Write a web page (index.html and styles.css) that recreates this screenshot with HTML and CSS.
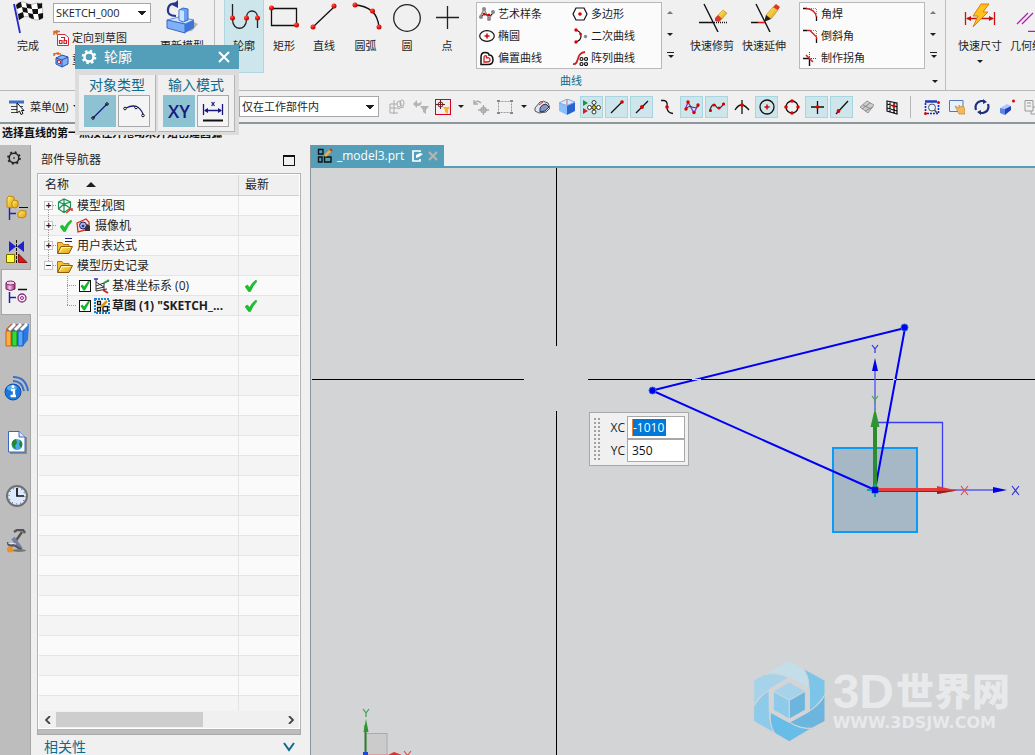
FILE: index.html
```html
<!DOCTYPE html>
<html lang="zh-CN">
<head>
<meta charset="utf-8">
<title>_model3.prt</title>
<link rel="stylesheet" href="styles.css">
</head>
<body>
<svg class="defs" aria-hidden="true">
  <defs>
    <radialGradient id="ball" cx=".35" cy=".3" r=".8"><stop offset="0" stop-color="#ff5a4a"/><stop offset=".5" stop-color="#e81408"/><stop offset="1" stop-color="#a80000"/></radialGradient>
    <linearGradient id="gold" x1="0" y1="0" x2="1" y2="1"><stop offset="0" stop-color="#fff27a"/><stop offset="1" stop-color="#e09a00"/></linearGradient>
    <linearGradient id="rose" x1="0" x2="1"><stop offset="0" stop-color="#b04890"/><stop offset=".4" stop-color="#f0c8e8"/><stop offset="1" stop-color="#902870"/></linearGradient>
    <symbol id="tick" viewBox="0 0 12 12"><path d="M0 6.500 2.500 5 4.500 7.500Q7 2.500 11 0L12 1.500Q8 5 5.500 11.500L3.500 11.500Z" fill="#16c52c" stroke="#0b9f20" stroke-width=".5"/></symbol>
    <symbol id="folder" viewBox="0 0 16 13"><path d="M.5 12V1.500H5L6.500 3.500H12V6" fill="#f7c030" stroke="#b07808"/><path d="M.5 12.500 4 5.500H15.500L12 12.500Z" fill="url(#gold)" stroke="#8a5a08"/><path d="M2.500 11 5 6.500H13" stroke="#fff6c0" fill="none"/></symbol>
  </defs>
</svg>

<header class="ribbon">
  <section class="group group-sketch">
    <button class="tool finish"><svg width="32" height="34" viewBox="0 0 32 34"><path d="M2 4 8 33" stroke="#2828c8" stroke-width="1.800"/><path d="M4 5Q9 0 14 3T25 3Q28 4 30 3L31 18Q25 22 19 18T7 20Z" fill="#fff" stroke="#888" stroke-width=".5"/><path d="M4 5Q7 2 9 2L10 7 5 9ZM14 3Q17 5 19 4L20 9 15 8ZM25 3Q28 4 30 3V8L26 9ZM10 7 15 8 16 13 11 12ZM20 9 26 9 26 14 21 14ZM6 14 11 12 12 17 7 20ZM16 13 21 14 22 19Q19 19 17 17ZM26 14 31 13V18L27 20Z" fill="#111"/></svg><span>完成</span></button>
    <div class="sketch-col">
      <select class="sketch-name" aria-label="草图名"><option>SKETCH_000</option></select>
      <button class="row-tool"><svg width="16" height="16" viewBox="0 0 16 16"><path d="M4.500 4.500H12L15.500 7.500V15.500H4.500Z" fill="#fff" stroke="#d03038"/><path d="M6.500 10.500H9V13.500H6.500ZM11 10.500H13.500V13.500H11ZM8 7.500H11.500V10" fill="none" stroke="#d02030" stroke-width="1.200"/><path d="M1 5V1.500H7M1 1 5 5M4 0V3" stroke="#d86a28" fill="none" stroke-width="1.500"/></svg><span>定向到草图</span></button>
      <button class="row-tool"><svg width="16" height="16" viewBox="0 0 16 16"><path d="M3 6 9 3 15 5V12L9 15 3 12Z" fill="#7fb0f4" stroke="#2450b8"/><path d="M3 6 9 8V15M9 8 15 5" stroke="#2450b8" fill="none"/><path d="M4.500 8 7.500 9V12L4.500 11Z" fill="#e8f2ff" stroke="#d02030"/><path d="M1 4Q1 1 6 1M1 1V4M4 2H8" stroke="#d86a28" fill="none" stroke-width="1.400"/></svg><span>重新附着</span></button>
    </div>
    <button class="tool update"><svg width="32" height="34" viewBox="0 0 32 34"><path d="M12 32 26 31 32 24 28 22Z" fill="#b5b5b5"/><path d="M1 20 13 17 28 20 19 24Z" fill="#cde4ff" stroke="#5f8ce0"/><path d="M1 20 19 24V33L1 28Z" fill="#7fb0f8" stroke="#3b68c8"/><path d="M19 24 28 20V28L19 33Z" fill="#3f74d8"/><path d="M13 10 17 8 22 9V20L17 22 13 20Z" fill="#6aa0f0" stroke="#3868cc"/><path d="M13.500 10 18 11V21.500L13.500 20Z" fill="#c8e2ff"/><path d="M10 16Q1 16 2 9 3 2 12 4" fill="none" stroke="#2a3590" stroke-width="2.200"/><path d="M12 0V8L6 5Z" fill="#2a3590"/></svg><span>更新模型</span></button>
  </section>

  <section class="group group-curve">
    <div class="group-row">
      <button class="tool active"><svg width="32" height="32" viewBox="0 0 32 32"><path d="M4.500 4V20C5 31 18 31 18.500 20V17C19 9 29 9 29.500 17V28" fill="none" stroke="#222" stroke-width="1.300"/><g fill="url(#ball)"><circle cx="4.500" cy="18" r="2.500"/><circle cx="18.500" cy="18" r="2.500"/><circle cx="29.500" cy="18" r="2.500"/></g></svg><span>轮廓</span></button>
      <button class="tool"><svg width="32" height="32" viewBox="0 0 32 32"><path d="M3.500 8.500H28.500V25.500H3.500Z" fill="none" stroke="#111" stroke-width="1.300"/><circle cx="3.500" cy="8" r="2.500" fill="url(#ball)"/><circle cx="28.500" cy="25" r="2.500" fill="url(#ball)"/></svg><span>矩形</span></button>
      <button class="tool"><svg width="32" height="32" viewBox="0 0 32 32"><path d="M5 27 26 7" stroke="#111" stroke-width="1.300"/><circle cx="5" cy="27" r="2.500" fill="url(#ball)"/><circle cx="26" cy="6" r="2.500" fill="url(#ball)"/></svg><span>直线</span></button>
      <button class="tool"><svg width="32" height="32" viewBox="0 0 32 32"><path d="M4 5Q27 6 29 27" fill="none" stroke="#111" stroke-width="1.300"/><circle cx="5" cy="5" r="2.500" fill="url(#ball)"/><circle cx="22.500" cy="11" r="2.500" fill="url(#ball)"/><circle cx="29" cy="27" r="2.500" fill="url(#ball)"/></svg><span>圆弧</span></button>
      <button class="tool"><svg width="32" height="32" viewBox="0 0 32 32"><circle cx="16" cy="18" r="13.300" fill="none" stroke="#222" stroke-width="1.300"/></svg><span>圆</span></button>
      <button class="tool"><svg width="32" height="32" viewBox="0 0 32 32"><path d="M5 17.500H28M16.500 6V29" stroke="#222" stroke-width="1.300"/></svg><span>点</span></button>
      <div class="gallery two">
        <button class="row-tool"><svg width="16" height="16" viewBox="0 0 16 16"><path d="M1 11 5 3 10 13 14 7" stroke="#888" fill="none" stroke-width="1.300"/><path d="M2 11Q4 7 8 9T14 7" stroke="#111" fill="none"/><g fill="#888"><circle cx="2" cy="11" r="2"/><circle cx="5" cy="3" r="2"/><circle cx="10" cy="13" r="2"/><circle cx="14" cy="6" r="2"/></g><circle cx="5" cy="8" r="1.500" fill="#d00"/><circle cx="10" cy="9" r="1.500" fill="#d00"/></svg><span>艺术样条</span></button>
        <button class="row-tool"><svg width="16" height="16" viewBox="0 0 16 16"><path d="M4 2H12L15 8 12 14H4L1 8Z" fill="none" stroke="#111" stroke-width="1.200"/><circle cx="8" cy="8" r="1.800" fill="#d00"/></svg><span>多边形</span></button>
        <button class="row-tool"><svg width="16" height="16" viewBox="0 0 16 16"><ellipse cx="8" cy="8" rx="7.300" ry="5.300" fill="none" stroke="#111" stroke-width="1.200"/><path d="M5.500 8H10.500M8 5.500V10.500" stroke="#d00" stroke-width="1.500"/></svg><span>椭圆</span></button>
        <button class="row-tool"><svg width="16" height="16" viewBox="0 0 16 16"><path d="M3 2Q9 3 9 8 9 13 3 14" fill="none" stroke="#111" stroke-width="1.200"/><g fill="#d00"><circle cx="4" cy="2" r="1.700"/><circle cx="8.500" cy="6" r="1.300"/><circle cx="4" cy="14" r="1.700"/></g><circle cx="13.500" cy="8.500" r="1.700" fill="#888"/></svg><span>二次曲线</span></button>
        <button class="row-tool"><svg width="16" height="16" viewBox="0 0 16 16"><path d="M2 14.500V7Q2 2.500 6 2.500 10 2.500 10 5 14 5 14 10 14 14.500 9 14.500Z" fill="none" stroke="#111" stroke-width="1.500"/><path d="M5 12V8Q5 5 7.500 6V8Q11 7 11 10 11 12 8 12Z" fill="none" stroke="#d02020" stroke-width="1.300"/></svg><span>偏置曲线</span></button>
        <button class="row-tool"><svg width="16" height="16" viewBox="0 0 16 16"><path d="M1 14C8 15 3 3 13 2" fill="none" stroke="#d02020" stroke-width="1.800"/><g fill="none" stroke="#111" stroke-width="1.200"><circle cx="9.500" cy="9" r="1.500"/><circle cx="14" cy="9" r="1.500"/><circle cx="9.500" cy="14" r="1.500"/><circle cx="14" cy="14" r="1.500"/></g></svg><span>阵列曲线</span></button>
      </div>
      <div class="spin"><button class="arrow up" aria-label="上一行"></button><button class="arrow" aria-label="下一行"></button><button class="arrow more" aria-label="更多曲线"></button></div>
      <button class="tool wide"><svg width="32" height="32" viewBox="0 0 32 32"><path d="M8 4 22 32M3 22.500H17" stroke="#111" stroke-width="1.400"/><path d="M18 22.500H32" stroke="#111" stroke-width="1.400" stroke-dasharray="1 1"/><path d="M22 15 27 10 31 13 26 19Z" fill="url(#gold)" stroke="#b07800" stroke-width=".5"/><path d="M19 18 22 15 26 19 23 22 19 21Z" fill="#d83828"/></svg><span>快速修剪</span></button>
      <button class="tool wide"><svg width="32" height="32" viewBox="0 0 32 32"><path d="M8 4 22 32M3 22.500H10" stroke="#111" stroke-width="1.400"/><path d="M10 22.500H17" stroke="#d02020" stroke-width="1.600"/><path d="M18 15 25 7 30 10 23 19Z" fill="url(#gold)" stroke="#a87400" stroke-width=".5"/><path d="M25 7 28 4 32 7 30 10Z" fill="#d83828"/><path d="M16 22 18 15 23 19Z" fill="#222"/></svg><span>快速延伸</span></button>
      <div class="gallery one">
        <button class="row-tool"><svg width="16" height="16" viewBox="0 0 16 16"><path d="M1 2.500H5M14.500 10V15" stroke="#111" stroke-width="1.300"/><path d="M7 2.500H14.500V9" stroke="#888" stroke-dasharray="1 1" fill="none"/><path d="M4 2.500Q13 3 14.500 11" stroke="#d02020" fill="none" stroke-width="1.300"/></svg><span>角焊</span></button>
        <button class="row-tool"><svg width="16" height="16" viewBox="0 0 16 16"><path d="M1 2.500H5M14.500 10V15" stroke="#111" stroke-width="1.300"/><path d="M7 2.500H14.500V9" stroke="#888" stroke-dasharray="1 1" fill="none"/><path d="M5 2.500H8L14.500 9V11" stroke="#d02020" fill="none" stroke-width="1.300"/></svg><span>倒斜角</span></button>
        <button class="row-tool"><svg width="16" height="16" viewBox="0 0 16 16"><path d="M1 8.500H8M7.500 8V16" stroke="#111" stroke-width="1.400"/><path d="M7.500 2V8M9 8.500H14" stroke="#555" stroke-dasharray="1 1"/><path d="M4 5 11 12" stroke="#d02020" stroke-width="1.500"/></svg><span>制作拐角</span></button>
      </div>
      <div class="spin"><button class="arrow up" aria-label="上一行"></button><button class="arrow" aria-label="下一行"></button><button class="arrow more" aria-label="更多编辑"></button></div>
    </div>
    <div class="caption"><span>曲线</span><button class="arrow" aria-label="曲线选项"></button></div>
  </section>

  <section class="group group-constraint">
    <button class="tool wide"><svg width="32" height="32" viewBox="0 0 32 32"><path d="M1.500 12V25M30.500 12V25M3 18.500H29" stroke="#c81010" stroke-width="1.300"/><path d="M2 18.500 7 16V21ZM30 18.500 25 16V21Z" fill="#c81010"/><path d="M17 4H25L19 12H24L9 27 14 16H9Z" fill="#ffc21c" stroke="#e07a10"/></svg><span>快速尺寸</span><i class="arrow-glyph"></i></button>
    <button class="tool wide"><svg width="32" height="32" viewBox="0 0 32 32"><path d="M1 24 12 13M6 24 17 13M12 31.500H27" stroke="#b020b0" stroke-width="1.300"/></svg><span>几何约束</span></button>
  </section>
</header>

<nav class="selection-bar">
  <button class="menu"><svg width="18" height="16" viewBox="0 0 18 16"><path d="M0 1.500H15V4.500H0Z" fill="#3a6ec8"/><path d="M2 7.500H9M2 10.500H9M2 13.500H8M10 7.500H14" stroke="#444"/><path d="M8 4V14L10.500 12 12 15.500 14 14.500 12.500 11.500H15Z" fill="#fff" stroke="#111"/></svg><span>菜单(<u>M</u>)</span><i class="arrow-glyph"></i></button>
  <select class="scope" aria-label="选择范围"><option>仅在工作部件内</option></select>
  <div class="filters">
    <button class="ic" aria-label="整个装配"><svg width="16" height="16" viewBox="0 0 16 16" fill="none" stroke="#aaa"><path d="M1 5H5V1M1 5V14H9M1 9H9M5 5V15M5 5H8"/><ellipse cx="10" cy="5" rx="2" ry="3"/><ellipse cx="13" cy="4" rx="2" ry="3"/><path d="M9 10Q12 8 15 8"/></svg></button>
    <button class="ic" aria-label="重置过滤器"><svg width="16" height="16" viewBox="0 0 16 16" fill="#b4b4b4"><path d="M0 5 4 1V4Q8 5 8 1 10 7 4 7V9Z"/><path d="M7 7H16L13 11V15L10 13V11Z"/></svg></button>
    <button class="ic boxed" aria-label="允许选择"><svg width="14" height="14" viewBox="0 0 14 14"><circle cx="4.500" cy="4.500" r="2.500" fill="none" stroke="#702020"/><path d="M0 4.500H9M4.500 0V9" stroke="#702020"/><path d="M7 7H14L12 10V14L9 12V10Z" fill="#ffb020"/></svg></button>
    <button class="arrow" aria-label="过滤选项"></button>
    <button class="ic" aria-label="移动"><svg width="16" height="16" viewBox="0 0 16 16" fill="none" stroke="#aaa" stroke-width="1.400"><path d="M1 1V5H5M1 5Q4 0 8 4"/><path d="M10.500 6V16M5 11H16"/><circle cx="10.500" cy="11" r="2.500"/></svg></button>
    <button class="ic" aria-label="矩形选择"><svg width="16" height="16" viewBox="0 0 16 16"><path d="M1.500 2.500H14.500V13.500H1.500Z" fill="none" stroke="#999" stroke-dasharray="2 1"/><path d="M0 2H3M13 2H16M0 14H3M13 14H16" stroke="#888" stroke-width="2"/></svg></button>
    <button class="arrow" aria-label="选择方式"></button>
  </div>
  <div class="snaps">
    <button class="ic" aria-label="实体"><svg width="16" height="16" viewBox="0 0 16 16"><path d="M1 9 6 3Q9 1 14 4L16 9 12 13 5 14 1 12Z" fill="#e0e6f2" stroke="#555"/><path d="M6 9Q8 5 12 5L15 8 11 12 6 13Z" fill="#8296c8" stroke="#334"/><path d="M5 6 9 3" stroke="#d03030"/></svg></button>
    <button class="ic" aria-label="着色"><svg width="18" height="16" viewBox="0 0 18 16"><path d="M1 4 9 6.500V16L1 12Z" fill="#8ac0f8"/><path d="M9 6.500 17 3V12L9 16Z" fill="#2a62d0"/><path d="M1 4 9 0 17 3 9 6.500Z" fill="#d4ecff" stroke="#80a8e8"/><path d="M9 0V6" stroke="#e06060"/></svg></button>
    <button class="ic on" aria-label="启用捕捉点"><svg width="18" height="16" viewBox="0 0 18 16"><path d="M0 1 5 4 0 7Z" fill="#189a30"/><path d="M0 9 5 12 0 15Z" fill="#d82020"/><g fill="#fff" stroke="#333"><circle cx="11" cy="3.500" r="2"/><circle cx="11" cy="13" r="2"/><circle cx="6.500" cy="8.500" r="2"/><circle cx="15.500" cy="8.500" r="2"/><circle cx="11" cy="8.500" r="2" fill="#e8c800"/></g></svg></button>
    <button class="ic on" aria-label="端点"><svg width="16" height="16" viewBox="0 0 16 16"><path d="M2 14 14 2" stroke="#111" stroke-width="1.300"/><circle cx="13" cy="3" r="1.800" fill="#d00"/></svg></button>
    <button class="ic on" aria-label="中点"><svg width="16" height="16" viewBox="0 0 16 16"><path d="M2 14 14 2" stroke="#111" stroke-width="1.300"/><circle cx="8" cy="8" r="2" fill="#d00"/></svg></button>
    <button class="ic" aria-label="控制点"><svg width="16" height="16" viewBox="0 0 16 16"><path d="M2 1.500H5Q9 2 8 8 8 14 14 14.500" fill="none" stroke="#111" stroke-width="1.300"/><circle cx="8" cy="8" r="1.800" fill="#d00"/></svg></button>
    <button class="ic on" aria-label="极点"><svg width="16" height="16" viewBox="0 0 16 16"><path d="M1.500 10 4 3 10 14 14 6" fill="none" stroke="#9038c0" stroke-width="1.400"/><path d="M1 11Q5 6 8 8T15 7" fill="none" stroke="#333"/><g fill="#d00"><circle cx="2" cy="10" r="1.700"/><circle cx="4" cy="3" r="1.700"/><circle cx="10" cy="13.500" r="1.700"/><circle cx="14" cy="6" r="1.700"/></g></svg></button>
    <button class="ic on" aria-label="定义点"><svg width="16" height="16" viewBox="0 0 16 16"><path d="M1 12Q2 5 6 6 10 13 15 4" fill="none" stroke="#333" stroke-width="1.300"/><g fill="#d00"><circle cx="1.500" cy="11.500" r="1.600"/><circle cx="5" cy="6" r="1.600"/><circle cx="10" cy="9" r="1.600"/><circle cx="14.500" cy="5" r="1.600"/></g></svg></button>
    <button class="ic" aria-label="交点"><svg width="16" height="16" viewBox="0 0 16 16"><path d="M1 11Q7 1 15 11M8 1V15" fill="none" stroke="#111" stroke-width="1.300"/><circle cx="8" cy="6" r="1.800" fill="#d00"/></svg></button>
    <button class="ic on" aria-label="圆心"><svg width="16" height="16" viewBox="0 0 16 16"><circle cx="8" cy="8" r="7" fill="none" stroke="#111" stroke-width="1.300"/><path d="M5.500 8H10.500M8 5.500V10.500" stroke="#d00" stroke-width="1.500"/></svg></button>
    <button class="ic" aria-label="象限点"><svg width="16" height="16" viewBox="0 0 16 16"><circle cx="8" cy="8" r="6" fill="none" stroke="#111" stroke-width="1.300"/><g fill="#d00"><circle cx="8" cy="2" r="1.800"/><circle cx="8" cy="14" r="1.800"/><circle cx="2" cy="8" r="1.800"/><circle cx="14" cy="8" r="1.800"/></g></svg></button>
    <button class="ic on" aria-label="现有点"><svg width="16" height="16" viewBox="0 0 16 16"><path d="M2 8H15M8.500 2V15" stroke="#111" stroke-width="1.300"/><circle cx="8.500" cy="8" r="1.800" fill="#d00"/></svg></button>
    <button class="ic on" aria-label="曲线上的点"><svg width="16" height="16" viewBox="0 0 16 16"><path d="M2 15 14 2" stroke="#111" stroke-width="1.300"/><circle cx="4.500" cy="12" r="1.900" fill="#d00"/></svg></button>
    <button class="ic" aria-label="面上的点"><svg width="16" height="16" viewBox="0 0 16 16"><path d="M1 8 8 2 15 6 9 14Z" fill="#ccc" stroke="#999"/><path d="M4 6 12 10M3 10 11 4M6 12 14 8" stroke="#888"/></svg></button>
    <button class="ic" aria-label="有界栅格"><svg width="16" height="16" viewBox="0 0 16 16"><path d="M3 2 13 4V15L3 12ZM3 5 13 8M3 9 13 12M6 2V13M10 3V14" fill="none" stroke="#111" stroke-width="1.200"/><circle cx="10" cy="7" r="1.700" fill="#d00"/></svg></button>
  </div>
  <div class="views">
    <button class="ic" aria-label="缩放"><svg width="16" height="16" viewBox="0 0 16 16"><path d="M1.500 4V13M3 14.500H14.500V5" fill="none" stroke="#1028d0" stroke-width="1.600" stroke-dasharray="2 1"/><path d="M1 2.500H13" stroke="#2038c0" stroke-width="2.500"/><circle cx="8" cy="8.500" r="3.500" fill="#e4f2ff" stroke="#555"/><path d="M10.500 11 13 14" stroke="#555" stroke-width="1.700"/><circle cx="14.500" cy="3.500" r="1.500" fill="#d00"/><circle cx="1.500" cy="14.500" r="1.500" fill="#d00"/></svg></button>
    <button class="ic" aria-label="平移"><svg width="16" height="16" viewBox="0 0 16 16"><path d="M.5 1.500H14V12.500H.5Z" fill="#e6f1fc" stroke="#5878b0"/><path d="M6 7 10 9V6L12 8 14 7 16 10V15H10Z" fill="#f5b95c" stroke="#b47a28" stroke-width=".6"/></svg></button>
    <button class="ic" aria-label="旋转"><svg width="16" height="16" viewBox="0 0 16 16"><path d="M2 11Q0 4 7 2H10M14 5Q16 12 9 14H6" fill="none" stroke="#203080" stroke-width="2.200"/><path d="M9 0 13 3 9 5ZM7 11V16L3 13Z" fill="#203080"/></svg></button>
    <button class="ic" aria-label="定向视图"><svg width="16" height="16" viewBox="0 0 16 16"><path d="M1 9 8 5 12 7 6 10Z" fill="#a8c8ff"/><path d="M1 9 6 10V16L1 14Z" fill="#5a84e8"/><path d="M6 10 12 7V11L6 16Z" fill="#2440b8"/><circle cx="14.500" cy="2" r="1.500" fill="#d00"/></svg></button>
    <button class="ic" aria-label="窗口"><svg width="16" height="16" viewBox="0 0 16 16" fill="none" stroke="#999"><path d="M1 1.500H9V12H1ZM3 4H7M3 7H7M7 12V15H15V8H9"/></svg></button>
  </div>
</nav>

<p class="prompt">选择直线的第一点按住并拖动来开始创建圆弧</p>

<main class="workspace">
  <aside class="rail">
    <button aria-label="资源条选项"><svg width="16" height="16" viewBox="0 0 16 16"><circle cx="8" cy="8" r="4.800" fill="none" stroke="#222" stroke-width="1.500"/><circle cx="8" cy="8" r="6" fill="none" stroke="#222" stroke-width="1.600" stroke-dasharray="2 2.712"/><circle cx="8" cy="8" r=".8"/></svg></button>
    <button aria-label="装配导航器"><svg width="24" height="26" viewBox="0 0 24 26"><path d="M2 3 4 1 9 2V11L7 13 2 12Z" fill="url(#gold)" stroke="#c88400"/><path d="M7 7 9 5 13 6V11L11 13 7 12Z" fill="url(#gold)" stroke="#c88400"/><path d="M14 12.500H23" stroke="#111"/><path d="M4.500 13V25M5 18.500H11" stroke="#2020c0" stroke-width="1.400"/><path d="M13 18 16 15.500 21 16V21L18 23 13 22Z" fill="url(#gold)" stroke="#c88400"/></svg></button>
    <button aria-label="约束导航器"><svg width="24" height="26" viewBox="0 0 24 26"><path d="M4 2V13L11 7.500ZM19 2V13L12 7.500Z" fill="#2020d0"/><path d="M11.500 1V25" stroke="#111" stroke-dasharray="3 1"/><path d="M1.500 15.500H9.500V23.500H1.500Z" fill="#ffff38" stroke="#7a6a00"/><path d="M13.500 15V23.500H22Z" fill="#d81818" stroke="#901010"/></svg></button>
    <button class="current" aria-label="部件导航器"><svg width="24" height="26" viewBox="0 0 24 26"><path d="M1 4V10Q5 13 10 10V4" fill="url(#rose)" stroke="#802060"/><ellipse cx="5.500" cy="4" rx="4.500" ry="2" fill="#f0d0ea" stroke="#802060"/><path d="M13 10.500H22" stroke="#111" stroke-width="1.500"/><path d="M4.500 13V24M5 18.500H11" stroke="#2020b0" stroke-width="1.500"/><circle cx="17" cy="19" r="4" fill="none" stroke="#902880" stroke-width="1.300"/><circle cx="17" cy="19" r="1.500" fill="none" stroke="#902880"/></svg></button>
    <button aria-label="重用库"><svg width="24" height="24" viewBox="0 0 24 24"><path d="M1 8 7 1H24L23 17 18 23H1Z" fill="#2a78e0"/><path d="M1 8H6V23H1Z" fill="#f8b040" stroke="#d06010"/><path d="M7 8H12V23H7Z" fill="#38d838" stroke="#138818"/><path d="M13 8H18V23H13Z" fill="#50a8ff" stroke="#1858c0"/><path d="M1 7 7 1M7 7 13 1M13 7 19 1" stroke="#e06010" stroke-width="1.500"/><path d="M4 7 10 1M10 7 16 1M16 7 22 1" stroke="#fff" stroke-width="3"/></svg></button>
    <button aria-label="HD3D工具"><svg width="26" height="26" viewBox="0 0 26 26"><path d="M9 2Q22 2 24 16M9 6Q18 6 20 16M10 10Q15 10 16 16" fill="none" stroke="#3870c8" stroke-width="2"/><circle cx="9" cy="17" r="8" fill="#1878dc" stroke="#1850a0"/><ellipse cx="8" cy="13" rx="5" ry="3" fill="#58acf8"/><path d="M7 15H10V21M6.500 21H12" stroke="#fff" stroke-width="2.400" fill="none"/><circle cx="9" cy="11.500" r="1.500" fill="#fff"/></svg></button>
    <button aria-label="网页浏览器"><svg width="20" height="24" viewBox="0 0 20 24"><path d="M3 7H20V24H3Z" fill="#8a8a8a"/><path d="M1.500 1.500H12L18 7V22H1.500Z" fill="#fff" stroke="#3868c0"/><path d="M12 1.500V7H18" fill="#dce8fa" stroke="#3868c0"/><circle cx="10" cy="14.500" r="5.500" fill="#48a8e8"/><path d="M5 12Q7 9 9 9L10 13 8 16 9 19Q4 17 5 12ZM13 10Q17 13 14 18L12 15Z" fill="#208830"/></svg></button>
    <button aria-label="历史记录"><svg width="24" height="24" viewBox="0 0 24 24"><circle cx="12" cy="12" r="10" fill="#dce9ff" stroke="#707070" stroke-width="2"/><circle cx="12" cy="12" r="8" fill="none" stroke="#444" stroke-dasharray="1 3.190"/><path d="M12 4V12H19" fill="none" stroke="#111" stroke-width="1.700"/></svg></button>
    <button aria-label="角色"><svg width="24" height="24" viewBox="0 0 24 24"><path d="M9 3 12 1H18L20 4M17 3 10 13" fill="none" stroke="#555" stroke-width="2.400"/><path d="M8 9 16 20" stroke="#7880a0" stroke-width="4"/><path d="M3 13Q3 18 9 16L17 21" fill="none" stroke="#556" stroke-width="2.400"/><path d="M3 14 11 15" stroke="#e8e8f4"/><ellipse cx="14" cy="21.500" rx="7" ry="1.500" fill="#777"/><circle cx="5" cy="20.500" r="3" fill="#f09020"/></svg></button>
  </aside>

  <section class="navigator">
    <div class="nav-title"><h2>部件导航器</h2><button class="max" aria-label="最大化"></button></div>
    <div class="tree-box">
      <div class="tree-scroll">
        <table class="tree">
          <colgroup><col class="c-name"><col class="c-new"></colgroup>
          <thead><tr><th>名称 <i class="sort"></i></th><th>最新</th></tr></thead>
          <tbody>
            <tr><td><div class="node first"><button class="exp" aria-label="展开">+</button><svg width="16" height="16" viewBox="0 0 16 16"><path d="M1.500 4 7 1 13.500 4V10L7 14.500 1.500 11ZM1.500 4 7 6 13.500 4M7 1V14M1.500 11 7 6 13 10" fill="none" stroke="#169450" stroke-width="1.200"/><path d="M9 15 14 11M12 11H15V13" fill="none" stroke="#e03828" stroke-width="1.600"/></svg><span>模型视图</span></div></td><td></td></tr>
            <tr><td><div class="node"><button class="exp" aria-label="展开">+</button><svg class="lead" width="12" height="12"><use href="#tick"/></svg><svg width="16" height="16" viewBox="0 0 16 16"><path d="M2 5 11 1 14 4V11L3 14Z" fill="#ffe4df" stroke="#d03020" stroke-width="1.300"/><circle cx="8" cy="7.500" r="3.500" fill="#a0b4f0" stroke="#202060"/><path d="M10 10 12 6 15 8V13H10Z" fill="#333"/><circle cx="8" cy="8" r="1.300" fill="#502080"/></svg><span>摄像机</span></div></td><td></td></tr>
            <tr><td><div class="node"><button class="exp" aria-label="展开">+</button><svg width="16" height="16" viewBox="0 0 16 16"><use href="#folder" y="3" width="16" height="13"/><path d="M8 .5H15M8 3.500H15" stroke="#202080"/></svg><span>用户表达式</span></div></td><td></td></tr>
            <tr><td><div class="node last"><button class="exp" aria-label="折叠">−</button><svg width="16" height="16" viewBox="0 0 16 16"><use href="#folder" y="2" width="16" height="13"/></svg><span>模型历史记录</span></div></td><td></td></tr>
            <tr><td><label class="node child"><input type="checkbox" checked><svg width="16" height="16" viewBox="0 0 16 16"><path d="M2 1V13L13 11M2 4 10 9 2 11M10 5V12M2 8 15 3" fill="none" stroke="#333"/><path d="M0 1H4" stroke="#2030d0" stroke-width="1.500"/><path d="M10 5 15 2" stroke="#20a040" stroke-width="2"/><path d="M9 12 14 15" stroke="#d02020" stroke-width="2"/></svg><span>基准坐标系 (0)</span></label></td><td><svg width="12" height="12"><use href="#tick"/></svg></td></tr>
            <tr><td><label class="node child end"><input type="checkbox" checked><svg width="16" height="16" viewBox="0 0 16 16"><path d="M1 1H15V15H1Z" fill="#fff" stroke="#1c82d0" stroke-width="2" stroke-dasharray="2 1"/><path d="M3.500 3.500H6.500V6.500H3.500ZM3.500 9.500H6.500V13H3.500ZM9 8.500H13.500V13H9Z" fill="none" stroke="#111" stroke-width="1.300"/><path d="M7 9 13 3" stroke="#d89818" stroke-width="2.500"/></svg><b>草图 (1) "SKETCH_...</b></label></td><td><svg width="12" height="12"><use href="#tick"/></svg></td></tr>
            <tr><td></td><td></td></tr><tr><td></td><td></td></tr><tr><td></td><td></td></tr><tr><td></td><td></td></tr>
            <tr><td></td><td></td></tr><tr><td></td><td></td></tr><tr><td></td><td></td></tr><tr><td></td><td></td></tr>
            <tr><td></td><td></td></tr><tr><td></td><td></td></tr><tr><td></td><td></td></tr><tr><td></td><td></td></tr>
            <tr><td></td><td></td></tr><tr><td></td><td></td></tr><tr><td></td><td></td></tr><tr><td></td><td></td></tr>
            <tr><td></td><td></td></tr><tr><td></td><td></td></tr><tr><td></td><td></td></tr><tr><td></td><td></td></tr>
          </tbody>
        </table>
      </div>
      <div class="hscroll"><button aria-label="向左"><svg width="6" height="8" viewBox="0 0 6 8"><path d="M5 0 1 4 5 8" fill="none" stroke="#444" stroke-width="1.800"/></svg></button><div class="track"><div class="thumb"></div></div><button aria-label="向右"><svg width="6" height="8" viewBox="0 0 6 8"><path d="M1 0 5 4 1 8" fill="none" stroke="#444" stroke-width="1.800"/></svg></button></div>
    </div>
    <div class="splitter"></div>
    <button class="fold"><span>相关性</span><svg width="12" height="10" viewBox="0 0 12 10"><path d="M1 1 6 8 11 1" fill="none" stroke="#0e6a8c" stroke-width="2"/></svg></button>
  </section>

  <section class="viewport">
    <div class="tabs"><div class="tab"><svg width="16" height="16" viewBox="0 0 16 16"><path d="M1.500 1.500H6V6H1.500ZM1.500 9H5V14H1.500ZM7.500 9H14V14H7.500Z" fill="none" stroke="#111" stroke-width="1.400"/><path d="M8 8 14 2" stroke="#f4b030" stroke-width="2.600"/><path d="M13 1 15 3" stroke="#d03020" stroke-width="2"/></svg><span>_model3.prt</span><svg width="12" height="12" viewBox="0 0 12 12"><path d="M8 2V1H1V11H8V9" fill="none" stroke="#fff" stroke-width="1.700"/><path d="M4 8V5L8 3 11 4 7 7Z" fill="#fff"/></svg><button aria-label="关闭"><svg width="10" height="10" viewBox="0 0 10 10"><path d="M1 1 9 9M9 1 1 9" stroke="#b9b4ad" stroke-width="2.200"/></svg></button></div></div>
    <div class="canvas">
      <svg class="scene">
        <g transform="translate(-311 -168)">
          <path d="M556.500 168V346M556.500 411V755M312 379.500H524M588 379.500H1035" stroke="#000" shape-rendering="crispEdges"/>
          <rect x="833" y="448" width="84" height="84" fill="#a6b7c6" stroke="#0a9bfa" stroke-width="2"/>
          <path d="M875 422.500H942.500V489" fill="none" stroke="#3c3cf0" stroke-width="1.300"/>
          <path d="M875 410V364M940 490H1000" stroke="#5a5af0" stroke-width="1.400"/>
          <path d="M875 358 878 371H872ZM1007 490 993 487V493Z" fill="#0000e6"/>
          <path d="M905 328 652 390.500 875 490Z" fill="none" stroke="#0000f5" stroke-width="2"/>
          <path d="M692 379.500H701M893 379.500H896" stroke="#e5e08a"/>
          <path d="M875 490V422" stroke="#2d8c2f" stroke-width="4"/><path d="M875 408 879.500 427H870.500Z" fill="#2d962f"/>
          <path d="M875 490H938" stroke="#e83c3c" stroke-width="4"/><path d="M875 491.500H938" stroke="#8c2424"/><path d="M957 490.500 937 486V494Z" fill="#e23434"/><path d="M957 490.500 937 491V494Z" fill="#8c2424"/>
          <path d="M867 490H880M875 484V497" stroke="#10a0b0" stroke-width="2"/><path d="M872 487 878 493M878 487 872 493" stroke="#003ce0" stroke-width="2"/>
          <g fill="#0000f0" stroke="#2668d0"><circle cx="652.500" cy="390.500" r="3.500"/><circle cx="904.500" cy="327.500" r="3.500"/></g><circle cx="875" cy="490" r="3.300" fill="#0000f0"/>
          <g fill="none" stroke-width="1.200">
            <path d="M872 345 875 349V353M878 345 875 349M1012 486 1019 495M1019 486 1012 495" stroke="#3030e0"/>
            <path d="M872 396 875 400V404M878 396 875 400" stroke="#48a850"/><path d="M961 486 968 495M968 486 961 495" stroke="#e84848"/>
            <path d="M363 709 366 713V717M369 709 366 713" stroke="#40a048"/><path d="M404 751 411 760M411 751 404 760" stroke="#e05050"/>
          </g>
          <rect x="366" y="733.500" width="21" height="21" fill="#cbcbcb" stroke="#aaa"/>
          <path d="M365.500 755V725" stroke="#2d7c2f" stroke-width="2"/><path d="M366 719 368.500 732H363.500Z" fill="#2d962f"/><path d="M366 754.500H388" stroke="#d8a0a0"/><path d="M388 755 394 752 402 755Z" fill="#e03030"/><path d="M363 755 363 752H368V755Z" fill="#1848e0"/>
        </g>
      </svg>
      <form class="coords">
        <i class="grip"></i>
        <label for="xc">XC</label><div class="field"><input id="xc" class="selected" value="-1010"></div>
        <label for="yc">YC</label><div class="field"><input id="yc" value="350"></div>
      </form>
      <div class="watermark">
        <svg width="73" height="84" viewBox="36 29 219 250"><g stroke="#d3d4d6" stroke-width="3"><path fill="#c3dde9" d="M66 76 145 32 188 57Q206 85 204 120L145 85Q105 66 66 76"/><path fill="#7cc4e8" d="M188 57 252 92V135Q228 170 204 185V120Q206 85 188 57"/><path fill="#6bb5de" d="M252 135V215L212 236Q180 238 145 218L204 185Q238 165 252 135"/><path fill="#68bde8" d="M212 236 145 276 100 250Q85 225 88 188L145 218Q180 240 212 236"/><path fill="#8ecaea" d="M100 250 38 215V170Q60 135 85 122V185Q85 225 100 250"/><path fill="#a6d3ea" d="M38 170V92L66 76Q105 66 145 85L88 120Q50 140 38 170"/><path fill="#d3d4d6" d="M145 83 205 118V185L145 218 85 185V118Z"/><path fill="#a6d3ea" d="M145 97 193 125 145 152 97 125Z"/><path fill="#8ecaea" d="M97 125 145 152V208L97 181Z"/><path fill="#6bb5de" d="M145 152 193 125V181L145 208Z"/></g></svg>
        <div><div class="brand"><span>3D</span>世界网</div><div class="site">WWW.3DSJW.COM</div></div>
      </div>
    </div>
  </section>
</main>

<div class="dialog" role="dialog" aria-label="轮廓">
  <div class="dialog-title"><svg width="16" height="16" viewBox="0 0 16 16"><circle cx="8" cy="8" r="4.500" fill="none" stroke="#fff" stroke-width="2.400"/><circle cx="8" cy="8" r="6.300" fill="none" stroke="#fff" stroke-width="2" stroke-dasharray="2.500 2.448"/></svg><h2>轮廓</h2><button aria-label="关闭"><svg width="12" height="12" viewBox="0 0 12 12"><path d="M1 1 11 11M11 1 1 11" stroke="#fff" stroke-width="2"/></svg></button></div>
  <div class="dialog-body">
    <fieldset><legend>对象类型</legend><div class="pair">
      <button class="picked" aria-label="直线"><svg width="20" height="20" viewBox="0 0 20 20"><path d="M3 17 17 3" stroke="#181880" stroke-width="1.200"/><circle cx="3" cy="17" r="1.300" fill="none" stroke="#111"/><circle cx="17" cy="3" r="1.300" fill="none" stroke="#111"/></svg></button>
      <button aria-label="圆弧"><svg width="24" height="20" viewBox="0 0 24 20"><path d="M4 7Q16 1 21 13" fill="none" stroke="#181880" stroke-width="1.300"/><g fill="#fff" stroke="#111"><circle cx="3" cy="7.500" r="1.300"/><circle cx="14" cy="6.500" r="1.300"/><circle cx="21" cy="14.500" r="1.300"/></g></svg></button>
    </div></fieldset>
    <fieldset><legend>输入模式</legend><div class="pair">
      <button class="picked xy">XY</button>
      <button aria-label="参数模式"><svg width="24" height="24" viewBox="0 0 24 24"><path d="M2.500 5V16M21.500 5V16M4 11.500H20" stroke="#181880" stroke-width="1.300"/><path d="M3 11.500 7 9V14ZM21 11.500 17 9V14Z" fill="#181880"/><path d="M10.500 3 13.500 7M13.500 3 10.500 7" stroke="#181880" stroke-width="1.200"/><path d="M2 21.500H22" stroke="#111" stroke-width="2"/></svg></button>
    </div></fieldset>
  </div>
</div>
</body>
</html>
```
FILE: styles.css
```css
* { box-sizing: border-box; }
html, body { height: 100%; }
body {
  margin: 0;
  display: flex;
  flex-direction: column;
  overflow: hidden;
  background: #f0f0f0;
  color: #1e1e1e;
  font: 11px/16px "Open Sans", "Noto Sans CJK SC", sans-serif;
}
button {
  border: 0;
  padding: 0;
  background: none;
  font: inherit;
  color: inherit;
  white-space: nowrap;
}
svg { display: block; flex: none; }
h2, p { margin: 0; font-weight: 400; }
.defs { position: absolute; width: 0; height: 0; }

select {
  appearance: none;
  border: 1px solid #a8a8a8;
  border-radius: 0;
  padding: 0 2px;
  color: #1e1e1e;
  font: inherit;
  background:
    linear-gradient(to bottom right, #1e1e1e 50%, transparent 51%) no-repeat right 4px center / 4px 4px,
    linear-gradient(to bottom left, #1e1e1e 50%, transparent 51%) no-repeat right 8px center / 4px 4px,
    #fff;
}

/* ribbon */
.ribbon { display: flex; height: 91px; flex: none; border-bottom: 1px solid #b9b9b9; overflow: hidden; }
.group { display: flex; flex: none; }
.group-sketch { width: 215px; padding-left: 8px; }
.tool { display: flex; flex-direction: column; align-items: center; width: 40px; height: 73px; flex: none; }
.tool > svg { margin-bottom: 6px; }
.group-sketch .tool > svg { margin-bottom: 4px; }
.group-curve .tool:nth-child(4) { width: 43px; }
.tool.wide { width: 52px; }
.tool.active { background: #cde6ec; border: solid #b0d7e0; border-width: 0 1px 1px; }
.update { width: 62px; }
.sketch-col { width: 98px; margin-left: 5px; padding-top: 3px; display: flex; flex-direction: column; align-items: flex-start; }
.sketch-name { width: 98px; height: 20px; margin-bottom: 4px; flex: none; }
.row-tool { display: flex; align-items: center; gap: 3px; height: 22px; }
.group-curve { flex-direction: column; width: 732px; border: solid #bdbdbd; border-width: 0 1px; margin-left: -1px; }
.group-row { display: flex; height: 73px; padding-left: 9px; }
.gallery { display: grid; height: 67px; margin-top: 2px; padding-left: 2px; background: #fbfbfb; border: 1px solid #b9b9b9; flex: none; align-content: center; }
.gallery.two { width: 186px; margin-left: 9px; grid-template-columns: 93px 1fr; }
.gallery.one { width: 126px; margin-left: 9px; }
.spin { display: flex; flex-direction: column; width: 16px; padding-top: 1px; flex: none; margin-right: 8px; }
.spin:last-child { margin-right: 0; }
.arrow { width: 16px; height: 22px; display: grid; place-items: center; flex: none; }
.arrow::before, .arrow-glyph { content: ""; width: 0; height: 0; border: 3px solid transparent; border-top: 3px solid #1e1e1e; border-bottom: 0; }
.arrow.up::before { border-top: 0; border-bottom: 3px solid #777; }
.arrow.more { border-top: 1px solid #1e1e1e; width: 7px; height: 6px; margin: 7px 0 0 5px; align-items: end; }
.caption { display: flex; align-items: center; height: 16px; color: #0e6a8c; padding-right: 2px; }
.caption span { flex: 1; text-align: center; }
.caption .arrow { height: 16px; }
.group-constraint { padding-left: 8px; }
.group-constraint .arrow-glyph { margin-top: 6px; }

/* selection bar */
.selection-bar { display: flex; align-items: center; height: 33px; flex: none; border-bottom: 2px solid #8b979a; overflow: hidden; padding-left: 9px; }
.menu { display: flex; align-items: center; gap: 3px; width: 230px; flex: none; }
.menu .arrow-glyph { margin-left: 2px; }
.scope { width: 140px; height: 21px; flex: none; }
.filters, .snaps, .views { display: flex; align-items: center; flex: none; gap: 2px; }
.filters { padding-left: 6px; gap: 1px; width: 151px; }
.snaps { padding-right: 7px; border-right: 1px solid #b5b5b5; }
.views { padding-left: 9px; }
.ic { width: 23px; height: 22px; display: grid; place-items: center; border: 1px solid transparent; flex: none; }
.ic.on { background: #cde6ec; border-color: #a9d5e0; }
.ic.boxed { width: 16px; height: 16px; border: 1px solid #d00020; margin: 0 2px; }
.filters .arrow { width: 14px; }

.prompt { height: 21px; flex: none; padding-left: 2px; line-height: 18px; font-weight: 700; white-space: nowrap; color: #111; }

/* workspace */
.workspace { display: flex; flex: 1; min-height: 0; }
.rail { width: 31px; flex: none; background: #bdbdbd; border-right: 1px solid #a6a6a6; display: flex; flex-direction: column; }
.rail button { display: grid; place-items: center; height: 54px; padding-left: 3px; flex: none; }
.rail button:nth-child(1) { height: 26px; padding: 0 3px 0 0; }
.rail button:nth-child(2) { margin-top: 10px; }
.rail button:nth-child(3) { height: 34px; }
.rail button:nth-child(4) { height: 46px; }
.rail button:nth-child(5) { height: 40px; }
.rail button:nth-child(6) { height: 66px; }
.rail button:nth-child(7) { height: 42px; }
.rail button:nth-child(8) { height: 66px; }
.rail button:nth-child(9) { height: 18px; }
.rail .current { background: #f0f0f0; border: solid #a6a6a6; border-width: 1px 0 1px 1px; margin: 0 -1px 0 1px; padding: 0; }

.navigator { width: 279px; flex: none; display: flex; flex-direction: column; padding: 0 9px 0 6px; font-size: 12px; }
.nav-title { display: flex; align-items: center; justify-content: space-between; height: 28px; flex: none; padding: 2px 6px 0 4px; }
.nav-title h2 { font-size: 12px; }
.max { width: 12px; height: 11px; border: 1px solid #111; border-top-width: 2px; }
.tree-box { flex: 1; min-height: 0; display: flex; flex-direction: column; border: 1px solid #b3b3b3; padding: 1px; background: #fff; }
.tree-scroll { flex: 1; min-height: 0; overflow: hidden; }
.tree { width: 100%; table-layout: fixed; border-collapse: separate; border-spacing: 0; }
.c-name { width: 200px; }
.tree th { height: 21px; padding: 0 6px; background: #f0f0f0; text-align: left; font-weight: 400; border-bottom: 1px solid #d0d0d0; border-right: 1px solid #d8d8d8; }
.tree th:last-child, .tree td:last-child { border-right: 0; }
.tree td { height: 20px; padding: 0 0 0 5px; border-bottom: 1px solid #e4e4e4; border-right: 1px solid #e4e4e4; background: #fafafa; overflow: hidden; }
.tree td + td { padding-left: 6px; }
.tree tr:nth-child(even) td { background: #f4f4f4; }
.sort { display: inline-block; border: 5px solid transparent; border-top: 0; border-bottom: 5px solid #1e1e1e; margin: 0 0 2px 14px; }
.node {
  display: flex;
  align-items: center;
  height: 19px;
  gap: 4px;
  white-space: nowrap;
  background:
    repeating-linear-gradient(#999 0 1px, transparent 0 2px) no-repeat 4px 0 / 1px 100%,
    repeating-linear-gradient(90deg, #999 0 1px, transparent 0 2px) no-repeat 9px 9px / 4px 1px;
}
.node.first { background-position: 4px 10px, 9px 9px; }
.node.last { background-size: 1px 9px, 4px 1px; }
.exp { width: 9px; height: 9px; background: #fff; border: 1px solid #c6c6c6; line-height: 7px; font-size: 10px; font-weight: 700; display: grid; place-items: center; flex: none; }
.node .lead { margin-left: 3px; margin-right: -1px; }
.node.child { margin-left: 23px; padding-left: 12px; background-position: 0 0, 0 9px; background-size: 1px 100%, 9px 1px; }
.node.child.end { background-size: 1px 10px, 9px 1px; }
.child svg { margin-left: -1px; }
.child span, .child b { margin-left: -2px; }
.child input { appearance: none; width: 12px; height: 12px; margin: 0; border: 1px solid #111; background: #fff; flex: none; display: grid; }
.child input:checked::before { content: ""; background: #16b52c; clip-path: polygon(5% 55%, 25% 40%, 40% 60%, 85% 0, 100% 10%, 50% 100%, 35% 100%); }
.hscroll { display: flex; height: 17px; flex: none; background: #f0f0f0; }
.hscroll button { width: 17px; display: grid; place-items: center; }
.track { flex: 1; }
.thumb { width: 65%; height: 15px; margin-top: 1px; background: #cdcdcd; }
.splitter { height: 5px; flex: none; background: #bdbdbd; border: 1px solid #a8a8a8; border-top: 0; }
.fold { display: flex; align-items: center; justify-content: space-between; height: 20px; padding: 4px 6px 0 7px; font-size: 14px; color: #0e6a8c; flex: none; }

.viewport { flex: 1; min-width: 0; display: flex; flex-direction: column; border-left: 1px solid #8b979a; }
.tabs { display: flex; height: 23px; flex: none; border-bottom: 2px solid #539fb9; }
.tab { display: flex; align-items: center; gap: 4px; padding: 0 6px; background: #539fb9; color: #fff; font-size: 12px; }
.tab span { margin-right: 4px; }
.canvas { position: relative; flex: 1; min-height: 0; background: #d3d4d6; overflow: hidden; }
.scene { width: 100%; height: 100%; }

.coords { position: absolute; left: 278px; top: 244px; display: grid; grid-template-columns: 12px 18px 58px; column-gap: 2px; padding: 3px; background: #f0f0f0; border: 1px solid #a8a8a8; align-items: center; font-size: 12px; }
.grip { grid-row: span 2; width: 8px; height: 44px; background: radial-gradient(circle, #a0a0a0 1px, transparent 0) 0 0 / 4px 4px; }
.coords label { text-align: right; }
.field { height: 23px; padding: 2px 4px; background: #fff; border: 1px solid #a8a8a8; display: flex; align-items: center; }
.coords input { border: 0; padding: 0; width: 100%; height: 17px; background: none; font: inherit; color: #111; outline: 0; }
.coords .selected { width: 34px; background: #0078d7; color: #fff; border-left: 1px solid #f08030; }

.watermark { position: absolute; right: 25px; bottom: 12px; display: flex; align-items: center; gap: 7px; color: #e8e9eb; font-family: "Liberation Sans", "Noto Sans CJK SC", sans-serif; }
.brand { display: flex; align-items: center; gap: 2px; height: 44px; font-size: 38px; font-weight: 900; line-height: 44px; }
.brand span { font-size: 48px; }
.site { font: 700 16px/18px "DejaVu Sans", sans-serif; }

/* floating tool dialog */
.dialog { position: absolute; left: 75px; top: 45px; width: 164px; background: #dcdcdc; }
.dialog-title { display: flex; align-items: center; height: 24px; padding: 0 9px 0 6px; gap: 7px; background: #539fb9; color: #fff; }
.dialog-title h2 { flex: 1; font-size: 14px; }
.dialog-body { display: flex; gap: 2px; padding: 6px 4px 3px; }
fieldset { flex: 1; min-width: 0; margin: 0; border: solid #b5b5b5; border-width: 0 1px 1px 0; padding: 0 0 4px; background: #f0f0f0; display: flex; flex-direction: column; align-items: center; }
legend { float: left; padding: 0; font-size: 14px; line-height: 20px; color: #0e6a8c; }
.pair { display: flex; gap: 2px; }
.pair button { width: 32px; height: 32px; border: 1px solid #a8a8a8; display: grid; place-items: center; background: #f4f4f4; }
.pair .picked { background: #8cc2d2; border-color: #8cc2d2; }
.pair .xy { font: 600 18px/30px "Open Sans", sans-serif; color: #181880; }
```
